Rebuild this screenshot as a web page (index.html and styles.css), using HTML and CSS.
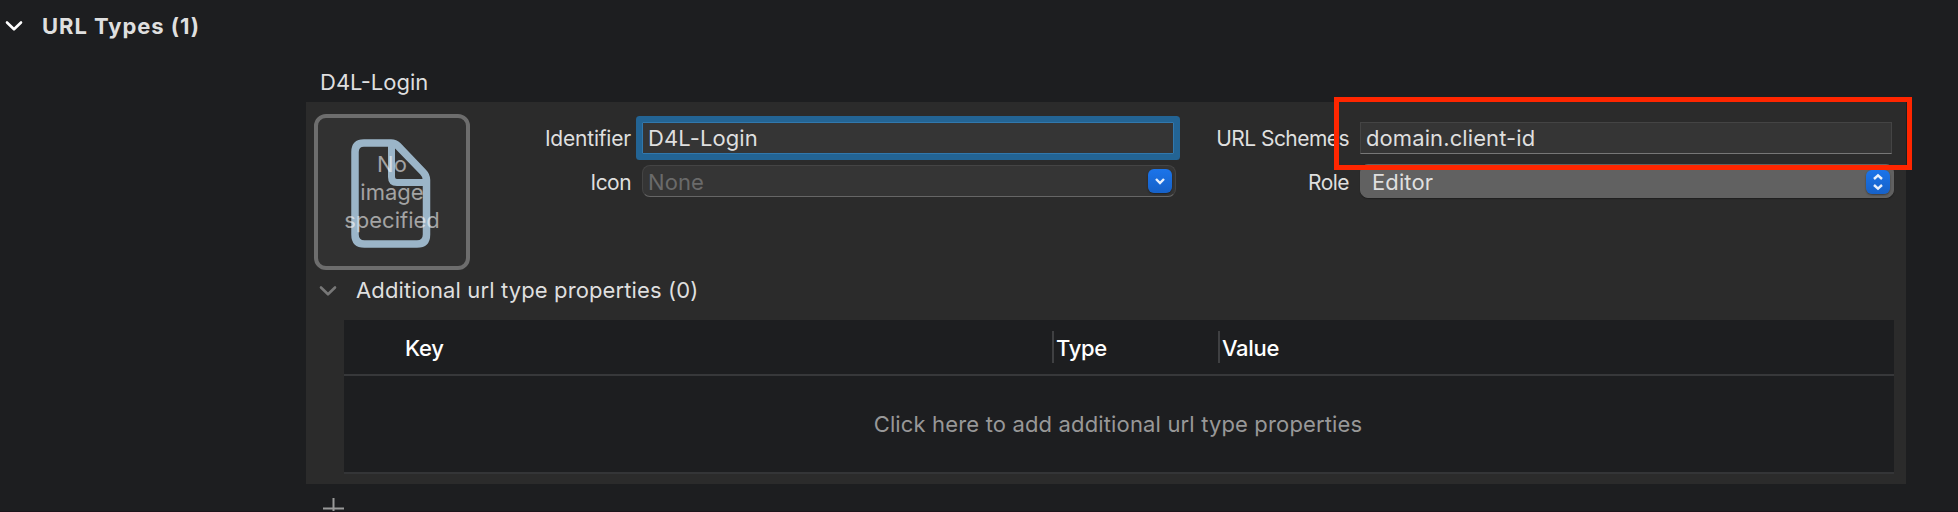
FILE: index.html
```html
<!DOCTYPE html>
<html lang="en">
<head>
<meta charset="utf-8">
<title>URL Types</title>
<link rel="stylesheet" href="styles.css">
</head>
<body>
<main class="editor">
  <header class="section-header">
    <svg class="chevron" width="18" height="12" viewBox="0 0 18 12"><path d="M2 2.5 L9 9.3 L16 2.5"/></svg>
    <h1 class="section-title">URL Types (1)</h1>
  </header>
  <section class="entry">
    <h2 class="entry-title">D4L-Login</h2>
    <div class="panel">
      <div class="form">
        <div class="image-well">
          <svg class="doc" width="80" height="110" viewBox="0 0 80 110">
            <path d="M13 4 H40 Q44 4 47 7 L72 33 Q75.500 36.500 75.500 41 V95.500 Q75.500 105 66 105 H13.500 Q4 105 4 95.500 V13 Q4 4 13 4 Z" fill="none" stroke="#9bb5c8" stroke-width="7.500"/>
            <path d="M40.500 5 V38 Q40.500 43.500 46 43.500 H75" fill="none" stroke="#9bb5c8" stroke-width="7"/>
          </svg>
          <p class="well-text">No<br>image<br>specified</p>
        </div>
        <div class="column identity">
          <label class="label">Identifier</label>
          <div class="field focused"><span>D4L-Login</span></div>
          <label class="label tight lower">Icon</label>
          <div class="field combo"><span>None</span>
            <svg class="knob" width="24" height="24" viewBox="0 0 24 24"><path d="M8 10 L12 14 L16 10"/></svg>
          </div>
        </div>
        <div class="column scheme">
          <label class="label tight">URL Schemes</label>
          <div class="field"><span>domain.client-id</span></div>
          <label class="label tight lower">Role</label>
          <div class="field popup"><span>Editor</span>
            <svg class="knob" width="24" height="24" viewBox="0 0 24 24"><path d="M8 9 L12 5.300 L16 9 M8 15 L12 18.700 L16 15"/></svg>
          </div>
          <div class="highlight"></div>
        </div>
      </div>
      <div class="sub-header">
        <svg class="chevron dim" width="18" height="12" viewBox="0 0 18 12"><path d="M2 2.500 L9 9.300 L16 2.500"/></svg>
        <h3 class="sub-title">Additional url type properties (0)</h3>
      </div>
      <div class="table">
        <div class="table-head">
          <span class="th key">Key</span>
          <span class="th type">Type</span>
          <span class="th value">Value</span>
        </div>
        <div class="table-empty">Click here to add additional url type properties</div>
      </div>
    </div>
    <svg class="plus" width="22" height="22" viewBox="0 0 22 22"><path d="M0 10.500 H21 M10.500 0 V21"/></svg>
  </section>
</main>
</body>
</html>
```
FILE: styles.css
```css
* { box-sizing: border-box; }
body {
  margin: 0;
  background: #1d1e20;
  color: #dfdfdf;
  font-family: Inter, "Liberation Sans", sans-serif;
  font-size: 22px;
  line-height: 28px;
  white-space: nowrap;
}
h1, h2, h3, p { margin: 0; font-size: inherit; font-weight: 400; }
.editor { height: 512px; overflow: hidden; border-bottom: 1px solid #1c141b; }
.section-header { display: flex; align-items: center; gap: 19px; height: 52px; padding-left: 5px; }
.section-title { font-weight: 700; letter-spacing: .95px; }
.chevron { display: block; fill: none; stroke: #fff; stroke-width: 2.6; stroke-linecap: round; stroke-linejoin: round; }
.chevron.dim { stroke: #777; }
.entry { width: 1600px; margin-left: 306px; }
.entry-title { height: 50px; padding: 16px 0 0 14px; }
.panel { height: 382px; padding: 12px 12px 0 8px; background: #2b2b2b; }
.form { display: flex; height: 158px; }
.image-well {
  display: grid;
  place-items: center;
  width: 156px;
  height: 156px;
  border: 4px solid #6d6d6d;
  border-radius: 12px;
  background: #313131;
}
.image-well > * { grid-area: 1 / 1; }
.doc { display: block; margin: 3px 2px 0 0; }
.well-text { text-align: center; color: rgba(255, 255, 255, .56); }
.column { display: grid; grid-template-rows: 32px 34px; row-gap: 10px; padding-top: 8px; height: 88px; position: relative; }
.identity { grid-template-columns: 161px 534px; column-gap: 11px; }
.scheme { grid-template-columns: 173px 534px; column-gap: 11px; }
.label { justify-self: end; font-size: 21px; line-height: 34px; letter-spacing: -.2px; }
.tight { letter-spacing: -.55px; }
.lower { padding-top: 2px; }
.field {
  height: 32px;
  width: 532px;
  padding-left: 5px;
  line-height: 32px;
  background: #353535;
  border: 1px solid #444;
  border-bottom-color: #777;
}
.field span { display: block; margin-top: -1px; letter-spacing: .1px; }
.focused { border-color: #3178ad; border-radius: 1px; box-shadow: 0 0 0 6px #236494; }
.combo, .popup { display: flex; justify-content: space-between; width: 534px; margin-top: 1px; border-radius: 8px; }
.combo { border-bottom-color: #666; color: #6a6a6a; }
.combo span, .popup span { margin-top: 0; }
.popup { height: 34px; margin-top: 0; padding-left: 11px; background: #616161; border-color: #616161; line-height: 34px; box-shadow: 0 1px 1px #202020; }
.knob {
  margin: 3px 3px 0 0;
  border-radius: 6px;
  background: linear-gradient(#1b74ea, #1661c8);
  box-shadow: 0 1px 2px rgba(0, 0, 0, .4);
  fill: none;
  stroke: #e8f0fc;
  stroke-width: 2.4;
}
.popup .knob { margin-top: 5px; }
/* red call-out around the URL scheme field */
.highlight { position: absolute; left: 158px; top: -17px; width: 578px; height: 73px; border: 5px solid #ff2600; }
.sub-header { display: flex; align-items: center; gap: 19px; height: 38px; padding-left: 5px; }
.sub-title { padding-bottom: 2px; letter-spacing: .12px; }
.table { margin: 10px 0 0 30px; height: 154px; background: #1d1e20; border-bottom: 2px solid #343537; }
.table-head { display: flex; align-items: center; height: 56px; border-bottom: 2px solid #37383a; color: #fff; font-weight: 500; letter-spacing: -.3px; }
.th { height: 32px; line-height: 34px; }
.key { width: 708px; padding-left: 61px; }
.type { width: 166px; padding-left: 2px; border-left: 2px solid #3f4042; }
.value { padding-left: 2px; border-left: 2px solid #3f4042; }
.table-empty { display: grid; place-items: center; height: 98px; padding: 0 2px 2px 0; color: #989898; letter-spacing: .15px; }
.plus { display: block; margin: 14px 0 0 17px; fill: none; stroke: #999; stroke-width: 2; }
```
